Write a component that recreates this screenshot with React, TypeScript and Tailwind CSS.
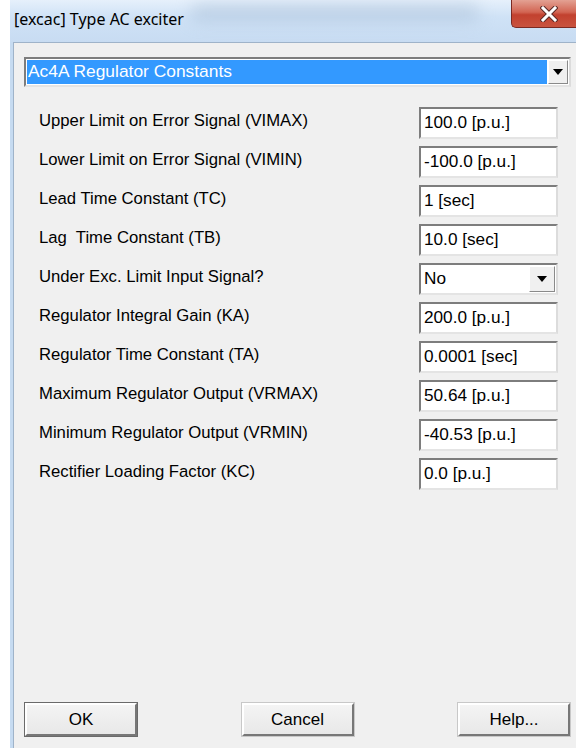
import React from "react";

const rows: { label: string; value: string; kind?: "select" }[] = [
  { label: "Upper Limit on Error Signal (VIMAX)", value: "100.0 [p.u.]" },
  { label: "Lower Limit on Error Signal (VIMIN)", value: "-100.0 [p.u.]" },
  { label: "Lead Time Constant (TC)", value: "1 [sec]" },
  { label: "Lag  Time Constant (TB)", value: "10.0 [sec]" },
  { label: "Under Exc. Limit Input Signal?", value: "No", kind: "select" },
  { label: "Regulator Integral Gain (KA)", value: "200.0 [p.u.]" },
  { label: "Regulator Time Constant (TA)", value: "0.0001 [sec]" },
  { label: "Maximum Regulator Output (VRMAX)", value: "50.64 [p.u.]" },
  { label: "Minimum Regulator Output (VRMIN)", value: "-40.53 [p.u.]" },
  { label: "Rectifier Loading Factor (KC)", value: "0.0 [p.u.]" },
];

function DownArrow() {
  return (
    <svg width="10" height="6" viewBox="0 0 10 6">
      <path d="M0 0 H10 L5 6 Z" fill="#000" />
    </svg>
  );
}

function ArrowButton({ className }: { className?: string }) {
  return (
    <div
      className={
        "flex items-center justify-center bg-[#f0f0f0] border border-t-white border-l-white border-b-[#8a8a8a] border-r-[#8a8a8a] " +
        (className ?? "")
      }
    >
      <DownArrow />
    </div>
  );
}

function Field({ value, kind }: { value: string; kind?: "select" }) {
  return (
    <div className="w-[139px] h-[32px] flex bg-white border-2 border-t-[#7d7d7d] border-l-[#7d7d7d] border-b-[#e4e4e4] border-r-[#dcdcdc]">
      <div className="flex-1 flex items-center pl-[3px] text-[17.2px] text-black leading-none whitespace-nowrap">
        {value}
      </div>
      {kind === "select" && <ArrowButton className="w-[26px] my-[1px] mr-[1px]" />}
    </div>
  );
}

function Button({ label, primary }: { label: string; primary?: boolean }) {
  return (
    <div
      className={
        "w-[114px] h-[35px] flex " +
        (primary ? "border border-[#6a6a6a]" : "border border-[#c8c8c8]")
      }
    >
      <div className="flex-1 flex items-center justify-center text-[17px] text-black bg-[linear-gradient(#f4f4f4,#e8e8e8)] border-2 border-t-white border-l-white border-b-[#777] border-r-[#777]">
        {label}
      </div>
    </div>
  );
}

export default function App() {
  return (
    <div className="w-[576px] h-[748px] bg-white overflow-hidden font-['Liberation_Sans',Arial,sans-serif]">
      <div className="ml-[10px] h-full flex flex-col bg-[#c6dbf1]">
        {/* title bar */}
        <div className="h-[42px] shrink-0 flex items-start relative bg-[linear-gradient(180deg,#e6f0fb_0%,#cfe2f6_40%,#c8dcf2_100%)]">
          <div className="absolute left-[180px] top-[4px] w-[290px] h-[18px] rounded-full bg-[#a9bed6] opacity-50 blur-[8px]" />
          <div className="relative pl-[4px] pt-[11px] text-[16px] text-black font-['Noto_Sans','Open_Sans',sans-serif] leading-none">
            [excac] Type AC exciter
          </div>
          <div className="ml-auto relative w-[65px] h-[28px] rounded-bl-[5px] border border-[#7b2a22] border-t-0 border-r-0 bg-[linear-gradient(180deg,#e3a193_0%,#d26553_45%,#c2412f_55%,#c9533f_100%)] flex items-center justify-center pl-[9px]">
            <svg width="18" height="16" viewBox="0 0 18 16">
              <path d="M3 2 L15 14 M15 2 L3 14" stroke="#5a2a26" strokeWidth="5" strokeLinecap="square" />
              <path d="M3 2 L15 14 M15 2 L3 14" stroke="#ffffff" strokeWidth="3" strokeLinecap="square" />
            </svg>
          </div>
        </div>

        {/* client area */}
        <div className="flex-1 ml-[3px] flex flex-col bg-[#f0f0f0] border-l border-t border-[#9fb3c9]">
          {/* section selector */}
          <div className="mt-[14px] ml-[10px] w-[547px] h-[30px] flex p-[1px] bg-white border-2 border-t-[#7d7d7d] border-l-[#7d7d7d] border-b-[#e4e4e4] border-r-[#dcdcdc]">
            <div className="flex-1 flex items-center pl-[1px] bg-[#3399ff] text-white text-[17.4px] leading-none">
              Ac4A Regulator Constants
            </div>
            <ArrowButton className="w-[20px] ml-[1px]" />
          </div>

          {/* parameter rows */}
          <div className="mt-[20px] flex flex-col gap-[7px]">
            {rows.map((r) => (
              <div key={r.label} className="h-[32px] flex items-center">
                <div className="pl-[25px] flex-1 text-[16.7px] text-black leading-none pb-[4px] whitespace-pre">
                  {r.label}
                </div>
                <div className="mr-[18px]">
                  <Field value={r.value} kind={r.kind} />
                </div>
              </div>
            ))}
          </div>

          <div className="flex-1" />

          {/* action buttons */}
          <div className="flex justify-between pl-[10px] pr-[5px] pb-[11px]">
            <Button label="OK" primary />
            <Button label="Cancel" />
            <Button label="Help..." />
          </div>
        </div>
      </div>
    </div>
  );
}
